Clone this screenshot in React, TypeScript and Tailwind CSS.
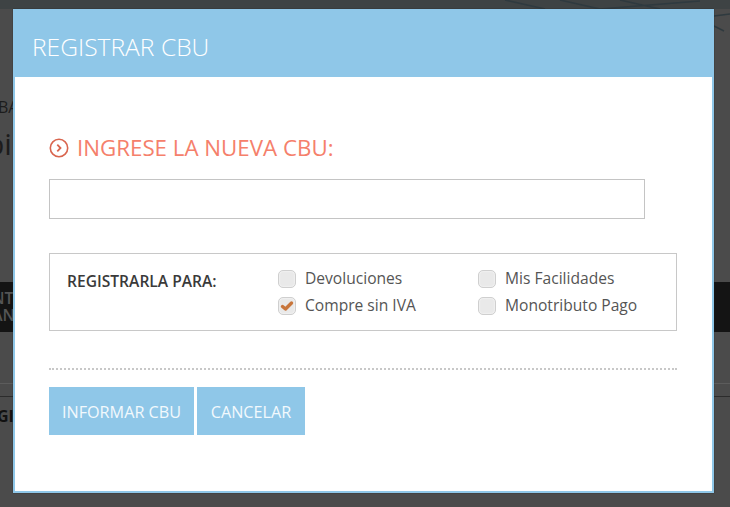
const font = { fontFamily: '"Open Sans", sans-serif' };

function Check({ label, checked }: { label: string; checked?: boolean }) {
  return (
    <label className="flex items-center h-[27px] text-[15.6px] text-[#555]">
      <span className="relative flex items-center justify-center w-[18px] h-[18px] rounded-[5px] border border-[#cfcfcf] bg-[#e9e9e9] shadow-[inset_0_0_2px_#ffffff] mr-[9px]">
        {checked && (
          <svg width="14" height="12" viewBox="0 0 14 12">
            <path d="M2.5 6.5 L5.5 9 L11.5 3" fill="none" stroke="#c8763c" strokeWidth="3.4" strokeLinecap="round" strokeLinejoin="round" />
          </svg>
        )}
      </span>
      {label}
    </label>
  );
}

export default function App() {
  return (
    <div className="relative w-[730px] h-[507px] overflow-hidden bg-[#4b4b4b]" style={font}>
      {/* Dimmed page behind the modal */}
      <div className="flex flex-col">
        <div className="h-[9px] bg-[#3e4344]" />
        <div className="h-[88px]" />
        <div className="h-[20px] text-[16px] leading-[20px] text-[#1c1c1c] -ml-[2px]">BA</div>
        <div className="h-[45px] pt-[9px] text-[30px] leading-[36px] text-[#1c1c1c] -ml-[14px]">pi</div>
        <div className="h-[120px]" />
        <div className="h-[50px] bg-[#141414] text-[#555] text-[16px] leading-[17px] font-semibold pt-[8px] -ml-[8px]">
          <div>NT</div>
          <div>AN</div>
        </div>
        <div className="h-[52px] border-b border-[#5c5c5c]" />
        <div className="h-[12px]" />
        <div className="h-px bg-[#2c2c2c]" />
        <div className="pt-[11px] text-[16px] leading-[16px] font-bold text-[#111] -ml-[3px]">GI</div>
      </div>

      {/* Faint shapes of the page's header, seen through the overlay */}
      <svg width="730" height="40" viewBox="0 0 730 40" className="absolute left-0 top-0">
        <path d="M505 0 L545 9 M560 0 L600 9 M620 0 L660 9 M600 9 L700 1 M714 16 L730 14 M714 26 L724 31" fill="none" stroke="#2f3a3f" strokeWidth="1.5" />
      </svg>

      {/* Modal */}
      <div className="absolute left-[13px] top-[9px] w-[701px] h-[484px] bg-white border-2 border-[#8fc7e8] flex flex-col shadow-[0_0_1px_#222]">
        <div className="h-[67px] shrink-0 -mx-[2px] -mt-[1px] bg-[#8fc7e8] flex items-center pl-[19px] pt-[7px] text-[24.6px] font-light text-white">
          REGISTRAR CBU
        </div>
        <div className="pl-[34px] pr-[35px] flex flex-col">
          <div className="mt-[56px] flex items-center h-[30px] text-[22.3px] text-[#f5806b]">
            <svg width="20" height="20" viewBox="0 0 20 20" className="mr-[8px] shrink-0">
              <circle cx="10" cy="10" r="8.7" fill="none" stroke="#d9654e" strokeWidth="1.6" />
              <path d="M8.3 6.7 L11.5 10 L8.3 13.3" fill="none" stroke="#d9654e" strokeWidth="1.8" />
            </svg>
            INGRESE LA NUEVA CBU:
          </div>
          <input className="mt-[16px] w-[596px] h-[40px] bg-white border border-[#c4c4c4] outline-none" />
          <div className="mt-[34px] h-[78px] border border-[#c8c8c8] flex pl-[17px] pt-[11px]">
            <div className="w-[211px] h-[27px] mt-[3px] flex items-center text-[15.6px] font-semibold text-[#3a3a3a]">REGISTRARLA PARA:</div>
            <div className="w-[200px] flex flex-col">
              <Check label="Devoluciones" />
              <Check label="Compre sin IVA" checked />
            </div>
            <div className="flex flex-col">
              <Check label="Mis Facilidades" />
              <Check label="Monotributo Pago" />
            </div>
          </div>
          <div className="mt-[37px] border-t-2 border-dotted border-[#c8c8c8]" />
          <div className="mt-[17px] flex gap-[3px]">
            <button className="w-[145px] h-[48px] pt-[2px] bg-[#8fc7e8] text-[#f2f9fd] text-[16.2px]">INFORMAR CBU</button>
            <button className="w-[108px] h-[48px] pt-[2px] bg-[#8fc7e8] text-[#f2f9fd] text-[16.2px]">CANCELAR</button>
          </div>
        </div>
      </div>
    </div>
  );
}
